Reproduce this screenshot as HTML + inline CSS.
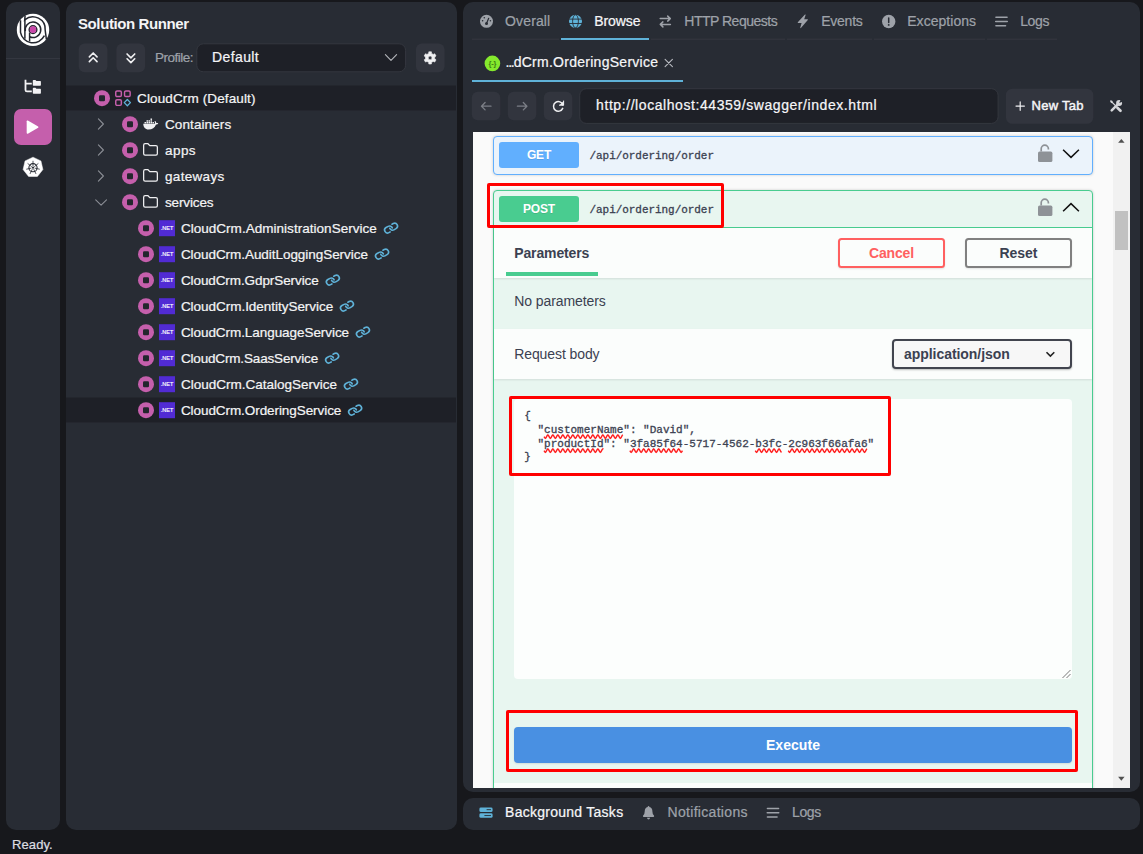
<!DOCTYPE html>
<html lang="en">
<head>
<meta charset="utf-8">
<title>Solution Runner</title>
<style>
*{box-sizing:border-box;margin:0;padding:0}
html,body{width:1143px;height:854px;overflow:hidden;background:#17181c}
body{position:relative;font-family:"Liberation Sans",Arial,sans-serif;color:#fff;font-size:13.5px}
.abs{position:absolute}
.panel{position:absolute;background:#282c34;border-radius:10px}
.t{position:absolute;white-space:pre;line-height:20px;height:20px}
.p{-webkit-text-stroke:0.22px currentColor}
.btn{position:absolute;background:#31343c;border-radius:6px}
svg{position:absolute;overflow:visible}
.row{position:absolute;left:66px;width:390px;height:25px;transform:translateY(0.45px)}
.row.sel{background:#1e2027}
.tr{font-size:13.5px;color:#f4f4f5}
.gray{color:#9ea2a9}
.sw{color:#3b4151}
.mono{font-family:"Liberation Mono",monospace}
</style>
</head>
<body>
<div class="panel" style="left:6px;top:2px;width:54px;height:828px"></div>
<div class="panel" style="left:66px;top:2px;width:391px;height:828px"></div>
<div class="panel" style="left:463px;top:2px;width:677px;height:790px"></div>
<div class="panel" style="left:463px;top:798px;width:677px;height:32px"></div>
<svg style="left:0;top:0" width="1143" height="854"><rect x="14" y="109" width="38" height="36" rx="7" fill="#c55fac"/><rect x="78.7" y="43.5" width="28.7" height="28.8" rx="6" fill="#32353e"/><rect x="116.4" y="43.5" width="28.7" height="28.8" rx="6" fill="#32353e"/><rect x="196.8" y="43.8" width="208.8" height="28" rx="6.5" fill="#1e2027" stroke="#34373f"/><rect x="415.9" y="43.5" width="28.6" height="28.8" rx="6" fill="#32353e"/><rect x="66" y="85.5" width="390" height="24.9" rx="0" fill="#1e2027"/><rect x="66" y="397.5" width="390" height="24.9" rx="0" fill="#1e2027"/><rect x="472" y="38.6" width="87" height="1.3" rx="0" fill="#32353d"/><rect x="651" y="38.6" width="134" height="1.3" rx="0" fill="#32353d"/><rect x="787" y="38.6" width="85" height="1.3" rx="0" fill="#32353d"/><rect x="874" y="38.6" width="111" height="1.3" rx="0" fill="#32353d"/><rect x="987" y="38.6" width="70" height="1.3" rx="0" fill="#32353d"/><rect x="471.8" y="91.7" width="28.5" height="28.5" rx="6" fill="#32353e"/><rect x="507.8" y="91.7" width="28.5" height="28.5" rx="6" fill="#32353e"/><rect x="543.8" y="91.7" width="28.5" height="28.5" rx="6" fill="#32353e"/><rect x="579.7" y="88.7" width="418.4" height="34.7" rx="6.5" fill="#1e2027" stroke="#34373f"/><rect x="1005.9" y="88.7" width="87.4" height="35.1" rx="6.5" fill="#32353e"/></svg>
<div class="abs" style="left:6px;top:58px;width:54px;height:1px;background:#343740"></div>
<svg style="left:16px;top:13px" width="32.4" height="32.4" viewBox="-17.000 -16.900 32.4 32.4">
<circle r="16.2" fill="#fff"/>
<g fill="none" stroke="#23262e" stroke-width="1.5" stroke-linecap="butt">
<path d="M-12.5 -9.6 L-12.5 2.4 A12.7 12.7 0 0 0 11.4 5.8"/>
<path d="M-7.9 -14.2 L-8.3 -10 A12.4 12.4 0 0 1 12.2 0.4 L13.4 9.4"/>
<path d="M-8.1 -9.8 L-8.1 8.8"/>
<path d="M-7.7 1.2 A7.8 7.8 0 1 1 -3.4 6.9"/>
<path d="M-3.4 2.6 L-3.4 11.4"/>
<circle cx="0" cy="-0.25" r="3.8"/>
</g>
<circle cx="0" cy="-0.25" r="3.3" fill="#c846a8"/>
</svg>
<svg style="left:24px;top:79px" width="17" height="15" viewBox="-0.200 -0.300 17 15">
<path d="M1.3 0.4 V10.6 Q1.3 12.1 2.8 12.1 H7.6 M1.3 4.4 H7.6" fill="none" stroke="#f2f2f4" stroke-width="1.8"/>
<path d="M8.6 1.3 Q8.6 0.6 9.3 0.6 H11.2 L12.2 1.6 H16 Q16.7 1.6 16.7 2.3 V5.7 Q16.7 6.4 16 6.4 H9.3 Q8.6 6.4 8.6 5.7 Z" fill="#f2f2f4"/>
<path d="M8.6 9.2 Q8.6 8.5 9.3 8.5 H11.2 L12.2 9.5 H16 Q16.7 9.5 16.7 10.2 V13.7 Q16.7 14.4 16 14.4 H9.3 Q8.6 14.4 8.6 13.7 Z" fill="#f2f2f4"/>
</svg>
<svg style="left:26px;top:119px" width="12.4" height="14.4" viewBox="-0.734 -0.875 13 14" preserveAspectRatio="none"><path d="M1.2 0.6 L12 6.3 Q12.8 7 12 7.7 L1.2 13.4 Q0 13.8 0 12.6 V1.4 Q0 0.2 1.2 0.6 Z" fill="#fff"/></svg>
<svg style="left:22px;top:156px" width="21" height="21" viewBox="-11.000 -11.300 21 21">
<path d="M0.00 -10.15 L7.94 -6.33 L9.90 2.26 L4.40 9.14 L-4.40 9.14 L-9.90 2.26 L-7.94 -6.33 Z" fill="#fff" stroke="#fff" stroke-width="0.5" stroke-linejoin="round"/>
<g fill="none" stroke="#2a2d35" stroke-width="1">
<circle cy="0.4" r="4.1" stroke-width="1.1"/>
<circle cy="0.4" r="1.1" fill="#2a2d35" stroke="none"/>
<path d="M0.00 -1.20 L0.00 -6.50 M1.25 -0.60 L5.39 -3.90 M1.56 0.76 L6.73 1.94 M0.69 1.84 L2.99 6.62 M-0.69 1.84 L-2.99 6.62 M-1.56 0.76 L-6.73 1.94 M-1.25 -0.60 L-5.39 -3.90" stroke-width="0.8"/>
</g>
</svg>
<div class="t" style="left:78px;top:14px;font-size:15px;font-weight:700;letter-spacing:-0.4px;color:#f4f4f6">Solution Runner</div>
<svg style="left:88px;top:52px" width="9.6" height="10.6" viewBox="-0.417 0.000 10 11" fill="none" stroke="#f0f0f2" stroke-width="1.7" stroke-linecap="round" stroke-linejoin="round"><path d="M1 5 L5 1 L9 5 M1 10 L5 6 L9 10"/></svg>
<svg style="left:126px;top:53px" width="9.6" height="10.6" viewBox="-0.104 0.000 10 11" fill="none" stroke="#f0f0f2" stroke-width="1.7" stroke-linecap="round" stroke-linejoin="round"><path d="M1 1 L5 5 L9 1 M1 6 L5 10 L9 6"/></svg>
<div class="t gray p" style="left:155.1px;top:48px;font-size:13.5px;letter-spacing:-0.53px">Profile:</div>
<div class="t p" style="left:212px;top:47px;font-size:14px;letter-spacing:0.39px;color:#f4f4f6">Default</div>
<svg style="left:384px;top:54px" width="12.4" height="7" viewBox="-0.800 0.000 12.4 7" fill="none" stroke="#b4b6bb" stroke-width="1.1" stroke-linecap="round" stroke-linejoin="round"><path d="M0.6 0.6 L6.2 6.3 L11.8 0.6"/></svg>
<svg style="left:423px;top:50px" width="14" height="14" viewBox="-7.100 -7.900 14 14"><path d="M-1.30 -6.11 L1.30 -6.11 L1.45 -4.47 L3.14 -3.49 L4.64 -4.18 L5.94 -1.93 L4.60 -0.98 L4.60 0.98 L5.94 1.93 L4.64 4.18 L3.14 3.49 L1.45 4.47 L1.30 6.11 L-1.30 6.11 L-1.45 4.47 L-3.14 3.49 L-4.64 4.18 L-5.94 1.93 L-4.60 0.98 L-4.60 -0.98 L-5.94 -1.93 L-4.64 -4.18 L-3.14 -3.49 L-1.45 -4.47 Z M1.9 0 A1.9 1.9 0 1 0 -1.9 0 A1.9 1.9 0 1 0 1.9 0 Z" fill="#f0f0f2" fill-rule="evenodd" stroke="#f0f0f2" stroke-width="0.6" stroke-linejoin="round"/></svg>
<svg style="left:94px;top:90px" width="16" height="16" viewBox="0.000 -0.200 16 16"><circle cx="8" cy="8" r="8" fill="#c55fac"/><rect x="5" y="5" width="6" height="6" rx="1.2" fill="#23262d"/></svg>
<svg style="left:115px;top:90px" width="16" height="16" viewBox="0.000 -0.200 16 16" fill="none" stroke-width="1.45"><rect x="0.75" y="0.75" width="5.6" height="5.6" rx="1.3" stroke="#c55fac"/><rect x="9.55" y="0.75" width="5.6" height="5.6" rx="1.3" stroke="#c55fac"/><rect x="0.75" y="9.55" width="5.6" height="5.6" rx="1.3" stroke="#c55fac"/><path d="M12.35 9.3 L15.45 12.4 L12.35 15.5 L9.25 12.4 Z" stroke="#5fb2d8" stroke-width="1.3" stroke-linejoin="round"/></svg>
<div class="t tr p" style="left:137px;top:89px;letter-spacing:0.13px">CloudCrm (Default)</div>
<svg style="left:97px;top:118px" width="6.2" height="11.6" viewBox="-0.800 -0.200 6.2 11.6" fill="none" stroke="#8b8e95" stroke-width="1.1" stroke-linecap="round" stroke-linejoin="round"><path d="M0.6 0.6 L5.6 5.8 L0.6 11"/></svg>
<svg style="left:122px;top:116px" width="16" height="16" viewBox="0.000 -0.200 16 16"><circle cx="8" cy="8" r="8" fill="#c55fac"/><rect x="5" y="5" width="6" height="6" rx="1.2" fill="#23262d"/></svg>
<svg style="left:143px;top:118px" width="15.5" height="11" viewBox="0.000 -1.600 31 22" fill="#f0f0f2"><path d="M0.5 10 H23.5 C24.5 8.5 24.2 6.2 23 4.8 C23.6 4.2 24.4 4.4 25 4.9 C26.3 6 26.6 7.6 26.4 8.6 C28 8 29.6 8.3 30.6 9 C29.8 11 27.8 11.6 26 11.5 C23.5 18 18.5 21.5 11 21.5 C4.5 21.5 0.8 17 0.5 10 Z"/><rect x="3" y="6.4" width="3.1" height="2.9"/><rect x="7" y="6.4" width="3.1" height="2.9"/><rect x="11" y="6.4" width="3.1" height="2.9"/><rect x="15" y="6.4" width="3.1" height="2.9"/><rect x="19" y="6.4" width="3.1" height="2.9"/><rect x="7" y="2.9" width="3.1" height="2.9"/><rect x="11" y="2.9" width="3.1" height="2.9"/><rect x="15" y="2.9" width="3.1" height="2.9"/><rect x="15" y="-0.6" width="3.1" height="2.9"/></svg>
<div class="t tr p" style="left:165px;top:115px;letter-spacing:0.1px">Containers</div>
<svg style="left:97px;top:144px" width="6.2" height="11.6" viewBox="-0.800 -0.200 6.2 11.6" fill="none" stroke="#8b8e95" stroke-width="1.1" stroke-linecap="round" stroke-linejoin="round"><path d="M0.6 0.6 L5.6 5.8 L0.6 11"/></svg>
<svg style="left:122px;top:142px" width="16" height="16" viewBox="0.000 -0.200 16 16"><circle cx="8" cy="8" r="8" fill="#c55fac"/><rect x="5" y="5" width="6" height="6" rx="1.2" fill="#23262d"/></svg>
<svg style="left:143px;top:143px" width="15" height="12.8" viewBox="0.000 -0.100 15 12.8" fill="none" stroke="#f0f0f2" stroke-width="1.25" stroke-linejoin="round"><path d="M0.65 2.1 Q0.65 0.65 2.1 0.65 L5 0.65 L6.8 2.6 L12.9 2.6 Q14.35 2.6 14.35 4 L14.35 10.7 Q14.35 12.15 12.9 12.15 L2.1 12.15 Q0.65 12.15 0.65 10.7 Z"/></svg>
<div class="t tr p" style="left:165px;top:141px;letter-spacing:0.44px">apps</div>
<svg style="left:97px;top:170px" width="6.2" height="11.6" viewBox="-0.800 -0.200 6.2 11.6" fill="none" stroke="#8b8e95" stroke-width="1.1" stroke-linecap="round" stroke-linejoin="round"><path d="M0.6 0.6 L5.6 5.8 L0.6 11"/></svg>
<svg style="left:122px;top:168px" width="16" height="16" viewBox="0.000 -0.200 16 16"><circle cx="8" cy="8" r="8" fill="#c55fac"/><rect x="5" y="5" width="6" height="6" rx="1.2" fill="#23262d"/></svg>
<svg style="left:143px;top:169px" width="15" height="12.8" viewBox="0.000 -0.100 15 12.8" fill="none" stroke="#f0f0f2" stroke-width="1.25" stroke-linejoin="round"><path d="M0.65 2.1 Q0.65 0.65 2.1 0.65 L5 0.65 L6.8 2.6 L12.9 2.6 Q14.35 2.6 14.35 4 L14.35 10.7 Q14.35 12.15 12.9 12.15 L2.1 12.15 Q0.65 12.15 0.65 10.7 Z"/></svg>
<div class="t tr p" style="left:165px;top:167px;letter-spacing:0.31px">gateways</div>
<svg style="left:95px;top:199px" width="12" height="6.4" viewBox="-0.100 -0.300 12 6.4" fill="none" stroke="#8b8e95" stroke-width="1.1" stroke-linecap="round" stroke-linejoin="round"><path d="M0.6 0.6 L6 5.8 L11.4 0.6"/></svg>
<svg style="left:122px;top:194px" width="16" height="16" viewBox="0.000 -0.200 16 16"><circle cx="8" cy="8" r="8" fill="#c55fac"/><rect x="5" y="5" width="6" height="6" rx="1.2" fill="#23262d"/></svg>
<svg style="left:143px;top:195px" width="15" height="12.8" viewBox="0.000 -0.100 15 12.8" fill="none" stroke="#f0f0f2" stroke-width="1.25" stroke-linejoin="round"><path d="M0.65 2.1 Q0.65 0.65 2.1 0.65 L5 0.65 L6.8 2.6 L12.9 2.6 Q14.35 2.6 14.35 4 L14.35 10.7 Q14.35 12.15 12.9 12.15 L2.1 12.15 Q0.65 12.15 0.65 10.7 Z"/></svg>
<div class="t tr p" style="left:165px;top:193px;letter-spacing:-0.13px">services</div>
<svg style="left:138px;top:220px" width="16" height="16" viewBox="0.000 -0.200 16 16"><circle cx="8" cy="8" r="8" fill="#c55fac"/><rect x="5" y="5" width="6" height="6" rx="1.2" fill="#23262d"/></svg>
<svg style="left:159px;top:220px" width="16" height="16" viewBox="0.000 -0.200 16 16"><rect width="16" height="16" fill="#512bd4"/><text x="8" y="10" font-family="Liberation Sans,Arial,sans-serif" font-size="5.5" font-weight="400" fill="#fff" stroke="#fff" stroke-width="0.15" text-anchor="middle">.NET</text></svg>
<svg style="left:382px;top:220px" width="17.7" height="14.4" viewBox="-15.595 -13.950 30.5 24.8" fill="none" stroke="#5fb2d8" stroke-width="2.8" stroke-linecap="round" stroke-linejoin="round"><g transform="rotate(16) translate(-12 -12)"><path d="M10 13a5 5 0 0 0 7.54.54l3-3a5 5 0 0 0-7.07-7.07l-1.72 1.71"/><path d="M14 11a5 5 0 0 0-7.54-.54l-3 3a5 5 0 0 0 7.07 7.07l1.71-1.71"/></g></svg>
<div class="t tr p" style="left:180.9px;top:219px;letter-spacing:0.03px">CloudCrm.AdministrationService</div>
<svg style="left:138px;top:246px" width="16" height="16" viewBox="0.000 -0.200 16 16"><circle cx="8" cy="8" r="8" fill="#c55fac"/><rect x="5" y="5" width="6" height="6" rx="1.2" fill="#23262d"/></svg>
<svg style="left:159px;top:246px" width="16" height="16" viewBox="0.000 -0.200 16 16"><rect width="16" height="16" fill="#512bd4"/><text x="8" y="10" font-family="Liberation Sans,Arial,sans-serif" font-size="5.5" font-weight="400" fill="#fff" stroke="#fff" stroke-width="0.15" text-anchor="middle">.NET</text></svg>
<svg style="left:373px;top:246px" width="17.7" height="14.4" viewBox="-15.595 -13.950 30.5 24.8" fill="none" stroke="#5fb2d8" stroke-width="2.8" stroke-linecap="round" stroke-linejoin="round"><g transform="rotate(16) translate(-12 -12)"><path d="M10 13a5 5 0 0 0 7.54.54l3-3a5 5 0 0 0-7.07-7.07l-1.72 1.71"/><path d="M14 11a5 5 0 0 0-7.54-.54l-3 3a5 5 0 0 0 7.07 7.07l1.71-1.71"/></g></svg>
<div class="t tr p" style="left:180.9px;top:245px;letter-spacing:-0.05px">CloudCrm.AuditLoggingService</div>
<svg style="left:138px;top:272px" width="16" height="16" viewBox="0.000 -0.200 16 16"><circle cx="8" cy="8" r="8" fill="#c55fac"/><rect x="5" y="5" width="6" height="6" rx="1.2" fill="#23262d"/></svg>
<svg style="left:159px;top:272px" width="16" height="16" viewBox="0.000 -0.200 16 16"><rect width="16" height="16" fill="#512bd4"/><text x="8" y="10" font-family="Liberation Sans,Arial,sans-serif" font-size="5.5" font-weight="400" fill="#fff" stroke="#fff" stroke-width="0.15" text-anchor="middle">.NET</text></svg>
<svg style="left:324px;top:272px" width="17.7" height="14.4" viewBox="-15.250 -13.950 30.5 24.8" fill="none" stroke="#5fb2d8" stroke-width="2.8" stroke-linecap="round" stroke-linejoin="round"><g transform="rotate(16) translate(-12 -12)"><path d="M10 13a5 5 0 0 0 7.54.54l3-3a5 5 0 0 0-7.07-7.07l-1.72 1.71"/><path d="M14 11a5 5 0 0 0-7.54-.54l-3 3a5 5 0 0 0 7.07 7.07l1.71-1.71"/></g></svg>
<div class="t tr p" style="left:180.9px;top:271px;letter-spacing:-0.09px">CloudCrm.GdprService</div>
<svg style="left:138px;top:298px" width="16" height="16" viewBox="0.000 -0.200 16 16"><circle cx="8" cy="8" r="8" fill="#c55fac"/><rect x="5" y="5" width="6" height="6" rx="1.2" fill="#23262d"/></svg>
<svg style="left:159px;top:298px" width="16" height="16" viewBox="0.000 -0.200 16 16"><rect width="16" height="16" fill="#512bd4"/><text x="8" y="10" font-family="Liberation Sans,Arial,sans-serif" font-size="5.5" font-weight="400" fill="#fff" stroke="#fff" stroke-width="0.15" text-anchor="middle">.NET</text></svg>
<svg style="left:338px;top:298px" width="17.7" height="14.4" viewBox="-15.422 -13.950 30.5 24.8" fill="none" stroke="#5fb2d8" stroke-width="2.8" stroke-linecap="round" stroke-linejoin="round"><g transform="rotate(16) translate(-12 -12)"><path d="M10 13a5 5 0 0 0 7.54.54l3-3a5 5 0 0 0-7.07-7.07l-1.72 1.71"/><path d="M14 11a5 5 0 0 0-7.54-.54l-3 3a5 5 0 0 0 7.07 7.07l1.71-1.71"/></g></svg>
<div class="t tr p" style="left:180.9px;top:297px;letter-spacing:-0.03px">CloudCrm.IdentityService</div>
<svg style="left:138px;top:324px" width="16" height="16" viewBox="0.000 -0.200 16 16"><circle cx="8" cy="8" r="8" fill="#c55fac"/><rect x="5" y="5" width="6" height="6" rx="1.2" fill="#23262d"/></svg>
<svg style="left:159px;top:324px" width="16" height="16" viewBox="0.000 -0.200 16 16"><rect width="16" height="16" fill="#512bd4"/><text x="8" y="10" font-family="Liberation Sans,Arial,sans-serif" font-size="5.5" font-weight="400" fill="#fff" stroke="#fff" stroke-width="0.15" text-anchor="middle">.NET</text></svg>
<svg style="left:354px;top:324px" width="17.7" height="14.4" viewBox="-15.422 -13.950 30.5 24.8" fill="none" stroke="#5fb2d8" stroke-width="2.8" stroke-linecap="round" stroke-linejoin="round"><g transform="rotate(16) translate(-12 -12)"><path d="M10 13a5 5 0 0 0 7.54.54l3-3a5 5 0 0 0-7.07-7.07l-1.72 1.71"/><path d="M14 11a5 5 0 0 0-7.54-.54l-3 3a5 5 0 0 0 7.07 7.07l1.71-1.71"/></g></svg>
<div class="t tr p" style="left:180.9px;top:323px;letter-spacing:-0.06px">CloudCrm.LanguageService</div>
<svg style="left:138px;top:350px" width="16" height="16" viewBox="0.000 -0.200 16 16"><circle cx="8" cy="8" r="8" fill="#c55fac"/><rect x="5" y="5" width="6" height="6" rx="1.2" fill="#23262d"/></svg>
<svg style="left:159px;top:350px" width="16" height="16" viewBox="0.000 -0.200 16 16"><rect width="16" height="16" fill="#512bd4"/><text x="8" y="10" font-family="Liberation Sans,Arial,sans-serif" font-size="5.5" font-weight="400" fill="#fff" stroke="#fff" stroke-width="0.15" text-anchor="middle">.NET</text></svg>
<svg style="left:323px;top:350px" width="17.7" height="14.4" viewBox="-15.767 -13.950 30.5 24.8" fill="none" stroke="#5fb2d8" stroke-width="2.8" stroke-linecap="round" stroke-linejoin="round"><g transform="rotate(16) translate(-12 -12)"><path d="M10 13a5 5 0 0 0 7.54.54l3-3a5 5 0 0 0-7.07-7.07l-1.72 1.71"/><path d="M14 11a5 5 0 0 0-7.54-.54l-3 3a5 5 0 0 0 7.07 7.07l1.71-1.71"/></g></svg>
<div class="t tr p" style="left:180.9px;top:349px;letter-spacing:-0.16px">CloudCrm.SaasService</div>
<svg style="left:138px;top:376px" width="16" height="16" viewBox="0.000 -0.200 16 16"><circle cx="8" cy="8" r="8" fill="#c55fac"/><rect x="5" y="5" width="6" height="6" rx="1.2" fill="#23262d"/></svg>
<svg style="left:159px;top:376px" width="16" height="16" viewBox="0.000 -0.200 16 16"><rect width="16" height="16" fill="#512bd4"/><text x="8" y="10" font-family="Liberation Sans,Arial,sans-serif" font-size="5.5" font-weight="400" fill="#fff" stroke="#fff" stroke-width="0.15" text-anchor="middle">.NET</text></svg>
<svg style="left:342px;top:376px" width="17.7" height="14.4" viewBox="-15.422 -13.950 30.5 24.8" fill="none" stroke="#5fb2d8" stroke-width="2.8" stroke-linecap="round" stroke-linejoin="round"><g transform="rotate(16) translate(-12 -12)"><path d="M10 13a5 5 0 0 0 7.54.54l3-3a5 5 0 0 0-7.07-7.07l-1.72 1.71"/><path d="M14 11a5 5 0 0 0-7.54-.54l-3 3a5 5 0 0 0 7.07 7.07l1.71-1.71"/></g></svg>
<div class="t tr p" style="left:180.9px;top:375px;letter-spacing:0.0px">CloudCrm.CatalogService</div>
<svg style="left:138px;top:402px" width="16" height="16" viewBox="0.000 -0.200 16 16"><circle cx="8" cy="8" r="8" fill="#c55fac"/><rect x="5" y="5" width="6" height="6" rx="1.2" fill="#23262d"/></svg>
<svg style="left:159px;top:402px" width="16" height="16" viewBox="0.000 -0.200 16 16"><rect width="16" height="16" fill="#512bd4"/><text x="8" y="10" font-family="Liberation Sans,Arial,sans-serif" font-size="5.5" font-weight="400" fill="#fff" stroke="#fff" stroke-width="0.15" text-anchor="middle">.NET</text></svg>
<svg style="left:346px;top:402px" width="17.7" height="14.4" viewBox="-15.767 -13.950 30.5 24.8" fill="none" stroke="#5fb2d8" stroke-width="2.8" stroke-linecap="round" stroke-linejoin="round"><g transform="rotate(16) translate(-12 -12)"><path d="M10 13a5 5 0 0 0 7.54.54l3-3a5 5 0 0 0-7.07-7.07l-1.72 1.71"/><path d="M14 11a5 5 0 0 0-7.54-.54l-3 3a5 5 0 0 0 7.07 7.07l1.71-1.71"/></g></svg>
<div class="t tr p" style="left:180.9px;top:401px;letter-spacing:-0.07px">CloudCrm.OrderingService</div>
<svg style="left:480px;top:14px" width="13" height="13" viewBox="-6.500 -7.300 13 13"><circle r="6.5" fill="#9ea2a9"/>
<circle cx="0" cy="2.2" r="1.5" fill="#282c34"/><path d="M0 2.2 L2.2 -3" stroke="#282c34" stroke-width="1.2" stroke-linecap="round"/>
<circle cx="-3.9" cy="-0.5" r="0.8" fill="#282c34"/><circle cx="-2.2" cy="-3.5" r="0.8" fill="#282c34"/><circle cx="3.9" cy="-0.5" r="0.8" fill="#282c34"/></svg>
<div class="t p" style="left:505.1px;top:10.5px;font-size:14px;letter-spacing:0.12px;color:#9ea2a9;font-weight:400">Overall</div>
<svg style="left:569px;top:14px" width="13" height="13" viewBox="-6.500 -7.300 13 13"><circle r="6.5" fill="#5fb2d8"/>
<g fill="none" stroke="#282c34" stroke-width="0.9"><ellipse rx="2.9" ry="6.5"/><path d="M-6.5 -2.2 H6.5 M-6.5 2.2 H6.5"/></g></svg>
<div class="t p" style="left:594.3px;top:10.5px;font-size:14px;letter-spacing:-0.1px;color:#f6f6f8;font-weight:400">Browse</div>
<div class="abs" style="left:561px;top:38px;width:88px;height:2px;background:#5fb2d8"></div>
<svg style="left:659px;top:15px" width="12" height="12.6" viewBox="-0.300 -0.200 12 12.6" fill="none" stroke="#9ea2a9" stroke-width="1.5" stroke-linecap="round" stroke-linejoin="round">
<path d="M0.9 3.4 H11 M8.4 0.9 L11 3.4 L8.4 5.9 M11.1 9.2 H1 M3.6 6.7 L1 9.2 L3.6 11.7"/></svg>
<div class="t p" style="left:684.3px;top:10.5px;font-size:14px;letter-spacing:-0.5px;color:#9ea2a9;font-weight:400">HTTP Requests</div>
<svg style="left:797px;top:14px" width="11" height="14" viewBox="-0.300 -0.300 11 14"><path d="M8 0.2 Q8.6 0.1 8.3 0.8 L6.9 5 H10.2 Q10.9 5.1 10.5 5.7 L3.6 13.7 Q2.9 14.1 3 13.3 L4.3 8.6 H0.8 Q0.1 8.5 0.5 7.9 L7.4 0.4 Z" fill="#9ea2a9"/></svg>
<div class="t p" style="left:821.2px;top:10.5px;font-size:14px;letter-spacing:-0.24px;color:#9ea2a9;font-weight:400">Events</div>
<svg style="left:882px;top:14px" width="13.4" height="13.4" viewBox="-6.700 -7.500 13.4 13.4"><circle r="6.7" fill="#9ea2a9"/>
<path d="M0 -3.6 V1" stroke="#282c34" stroke-width="1.5" stroke-linecap="round"/><circle cx="0" cy="3.4" r="0.95" fill="#282c34"/></svg>
<div class="t p" style="left:907.2px;top:10.5px;font-size:14px;letter-spacing:0.05px;color:#9ea2a9;font-weight:400">Exceptions</div>
<svg style="left:995px;top:16px" width="13" height="10" viewBox="0.000 -0.500 13 10" fill="none" stroke="#9ea2a9" stroke-width="1.45" stroke-linecap="round"><path d="M0.9 0.7 H12.1 M0.7 5 H12.3 M0.9 9.3 H10.6"/></svg>
<div class="t p" style="left:1020.2px;top:10.5px;font-size:14px;letter-spacing:-0.35px;color:#9ea2a9;font-weight:400">Logs</div>
<svg style="left:484px;top:55px" width="16" height="16" viewBox="-8.400 -8.400 16 16"><circle r="7.8" fill="#85ea2d"/>
<text x="0" y="2.5" font-family="Liberation Sans,Arial,sans-serif" font-size="7.5" font-weight="700" fill="#3d7f14" text-anchor="middle" letter-spacing="-0.2">{-}</text></svg>
<div class="t p" style="left:505.4px;top:52px;font-size:14px;letter-spacing:0px;color:#f6f6f8;font-weight:400"><span style="letter-spacing:-1.15px">...</span><span style="letter-spacing:0.27px">dCrm.OrderingService</span></div>
<svg style="left:664px;top:58px" width="8.5" height="8.5" viewBox="-0.500 -0.800 8.5 8.5" fill="none" stroke="#b9bcc2" stroke-width="1.1" stroke-linecap="round"><path d="M0.6 0.6 L7.9 7.9 M7.9 0.6 L0.6 7.9"/></svg>
<div class="abs" style="left:472px;top:80px;width:211px;height:2px;background:#5fb2d8"></div>
<svg style="left:480px;top:101px" width="11" height="9" viewBox="-0.700 -0.700 11 9" fill="none" stroke="#7b7e86" stroke-width="1.3" stroke-linecap="round" stroke-linejoin="round"><path d="M10.3 4.5 H0.8 M4.4 0.8 L0.8 4.5 L4.4 8.2"/></svg>
<svg style="left:516px;top:101px" width="11" height="9" viewBox="-0.700 -0.700 11 9" fill="none" stroke="#7b7e86" stroke-width="1.3" stroke-linecap="round" stroke-linejoin="round"><path d="M0.7 4.5 H10.2 M6.6 0.8 L10.2 4.5 L6.6 8.2"/></svg>
<svg style="left:552px;top:100px" width="12" height="12" viewBox="-6.300 -6.200 12 12" fill="none" stroke="#f0f0f2" stroke-width="1.5" stroke-linecap="round" stroke-linejoin="round"><path d="M4.6 -1.2 A4.8 4.8 0 1 0 4.4 2.2"/><path d="M5.3 -5.2 V-1 H1.1" fill="#f0f0f2" stroke-width="1"/></svg>
<div class="t p" style="left:596.1px;top:95px;font-size:14px;letter-spacing:0.57px;color:#f6f6f8;font-weight:400">http://localhost:44359/swagger/index.html</div>
<svg style="left:1015px;top:101px" width="9.6" height="9.6" viewBox="-0.400 -0.300 9.6 9.6" fill="none" stroke="#f0f0f2" stroke-width="1.2" stroke-linecap="round"><path d="M4.8 0.6 V9 M0.6 4.8 H9"/></svg>
<div class="t" style="left:1031.6px;top:96px;font-size:13px;letter-spacing:0.27px;color:#f6f6f8;-webkit-text-stroke:0.45px #f6f6f8">New Tab</div>
<svg style="left:1109px;top:99px" width="13" height="12.6" viewBox="-0.600 -0.800 13 12.6">
<g fill="none" stroke="#d6d7da" stroke-linecap="round">
<path d="M2.1 10.6 L7.6 5.1" stroke-width="2.5"/>
<path d="M7.8 7.9 L10.9 11" stroke-width="2.7"/>
<path d="M1.6 1.6 L5.6 5.6" stroke-width="1.3"/>
</g>
<circle cx="9.5" cy="3.3" r="3" fill="#d6d7da"/>
<path d="M9.6 3.2 L11.2 -0.6 L13.6 1.8 Z" fill="#282c34"/>
<path d="M0.6 0.4 L2.6 0.9 L3.4 2.6 L2.3 3.5 L0.9 2.5 Z" fill="#d6d7da"/>
</svg>
<div class="abs sw" style="left:473px;top:132px;width:657px;height:656px;background:#fafafa;overflow:hidden"><div class="abs" style="left:640px;top:0;width:17px;height:656px;background:#f1f1f1"></div><div class="abs" style="left:642px;top:79px;width:13px;height:39px;background:#c1c1c1"></div><svg style="left:644px;top:6px" width="7.4" height="4.4" viewBox="-0.757 -0.795 8 5"><path d="M4 0.3 L7.7 4.6 H0.3 Z" fill="#505050"/></svg><svg style="left:644px;top:644px" width="7.4" height="4.4" viewBox="-0.757 -0.568 8 5"><path d="M0.3 0.4 H7.7 L4 4.7 Z" fill="#505050"/></svg><div class="abs" style="left:20px;top:4px;width:600px;height:39px;background:#ebf3fb;border:1px solid #61affe;border-radius:4px;box-shadow:0 0 3px rgba(0,0,0,.19)"></div><div class="abs" style="left:26px;top:10px;width:80px;height:26px;background:#61affe;border-radius:3px"></div><div class="t" style="left:26px;top:13px;width:80px;text-align:center;font-size:12px;font-weight:700;color:#fff;letter-spacing:-0.2px;text-shadow:0 1px 0 rgba(0,0,0,.1)">GET</div><div class="t mono" style="left:116.5px;top:13.5px;font-size:11px;font-weight:400;-webkit-text-stroke:0.3px #3b4151;color:#3b4151;letter-spacing:-0.05px">/api/ordering/order</div><svg style="left:565px;top:12px" width="14.4" height="18" viewBox="0 0 14.4 18"><rect x="0" y="7.6" width="14.4" height="10.4" rx="1.6" fill="#8e9297"/><path d="M3.2 7.6 V4.8 A3.6 3.6 0 0 1 10.4 4.8 V5.6" fill="none" stroke="#8e9297" stroke-width="1.7"/></svg><svg style="left:589px;top:17px" width="17" height="9.5" viewBox="-0.500 0.000 17 9.5" fill="none" stroke="#111" stroke-width="1.5"><path d="M0.6 0.7 L8.5 8.4 L16.4 0.7"/></svg><div class="abs" style="left:20px;top:58.2px;width:600px;height:640px;background:#e8f6f0;border:1px solid #49cc90;border-radius:4px;box-shadow:0 0 3px rgba(0,0,0,.19)"></div><div class="abs" style="left:21px;top:94.7px;width:598px;height:1px;background:#49cc90"></div><div class="abs" style="left:26px;top:64px;width:80px;height:26px;background:#49cc90;border-radius:3px"></div><div class="t" style="left:26px;top:67px;width:80px;text-align:center;font-size:12px;font-weight:700;color:#fff;letter-spacing:-0.2px;text-shadow:0 1px 0 rgba(0,0,0,.1)">POST</div><div class="t mono" style="left:116.5px;top:67.5px;font-size:11px;font-weight:400;-webkit-text-stroke:0.3px #3b4151;color:#3b4151;letter-spacing:-0.05px">/api/ordering/order</div><svg style="left:565px;top:66px" width="14.4" height="18" viewBox="0 0 14.4 18"><rect x="0" y="7.6" width="14.4" height="10.4" rx="1.6" fill="#8e9297"/><path d="M3.2 7.6 V4.8 A3.6 3.6 0 0 1 10.4 4.8 V5.6" fill="none" stroke="#8e9297" stroke-width="1.7"/></svg><svg style="left:589px;top:70px" width="17" height="9.5" viewBox="-0.500 -0.500 17 9.5" fill="none" stroke="#111" stroke-width="1.5"><path d="M0.6 8.8 L8.5 1.1 L16.4 8.8"/></svg><div class="abs" style="left:21px;top:95.7px;width:598px;height:50.3px;background:#fbfdfc;box-shadow:0 1px 2px rgba(0,0,0,.1)"></div><div class="t" style="left:41.2px;top:111.3px;font-size:14px;font-weight:700;color:#3b4151;letter-spacing:-0.12px">Parameters</div><div class="abs" style="left:33px;top:140px;width:92px;height:4px;background:#49cc90"></div><div class="abs" style="left:365.2px;top:106.3px;width:106.5px;height:29.5px;border:2px solid #ff6060;border-radius:3.5px;background:#fbfdfc;box-shadow:0 1px 2px rgba(0,0,0,.1)"></div><div class="t" style="left:365.2px;top:111.3px;width:106.5px;text-align:center;font-size:14px;font-weight:700;color:#ff6060;letter-spacing:-0.16px">Cancel</div><div class="abs" style="left:492.2px;top:106.3px;width:106.5px;height:29.5px;border:2px solid #808080;border-radius:3.5px;background:#fbfdfc;box-shadow:0 1px 2px rgba(0,0,0,.1)"></div><div class="t" style="left:492.2px;top:111.3px;width:106.5px;text-align:center;font-size:14px;font-weight:700;color:#3b4151;letter-spacing:-0.06px">Reset</div><div class="t" style="left:41.2px;top:159px;font-size:14px;color:#3b4151;letter-spacing:-0.08px">No parameters</div><div class="abs" style="left:21px;top:196.5px;width:598px;height:50.5px;background:#fbfdfc;box-shadow:0 1px 2px rgba(0,0,0,.1)"></div><div class="t" style="left:41.2px;top:212.3px;font-size:14px;color:#3b4151;letter-spacing:-0.09px">Request body</div><div class="abs" style="left:419.4px;top:207.4px;width:179.4px;height:29.3px;border:2px solid #41444e;border-radius:4px;background:#f7f7f7;box-shadow:0 1px 2px rgba(0,0,0,.25)"></div><div class="t" style="left:431px;top:212.3px;font-size:14px;font-weight:700;color:#3b4151;letter-spacing:-0.05px">application/json</div><svg style="left:572px;top:219px" width="9.2" height="5.8" viewBox="-0.800 -0.500 9.2 5.8" fill="none" stroke="#222" stroke-width="1.6"><path d="M0.7 0.8 L4.6 4.6 L8.5 0.8"/></svg><div class="abs" style="left:41px;top:267px;width:558px;height:280px;background:#fcfefd;border-radius:4px"></div><div class="t mono" style="left:51.3px;top:274.0px;font-size:11px;font-weight:400;-webkit-text-stroke:0.3px #3b4151;color:#3b4151;letter-spacing:0">{</div><div class="t mono" style="left:51.3px;top:287.8px;font-size:11px;font-weight:400;-webkit-text-stroke:0.3px #3b4151;color:#3b4151;letter-spacing:0">  &quot;customerName&quot;: &quot;David&quot;,</div><div class="t mono" style="left:51.3px;top:301.6px;font-size:11px;font-weight:400;-webkit-text-stroke:0.3px #3b4151;color:#3b4151;letter-spacing:0">  &quot;productId&quot;: &quot;3fa85f64-5717-4562-b3fc-2c963f66afa6&quot;</div><div class="t mono" style="left:51.3px;top:315.4px;font-size:11px;font-weight:400;-webkit-text-stroke:0.3px #3b4151;color:#3b4151;letter-spacing:0">}</div><svg style="left:0;top:0" width="657" height="656" fill="none" stroke="#ff2020" stroke-width="1.4"><path d="M71.10 304.60 L71.72 305.87 L72.35 306.40 L72.97 305.87 L73.60 304.60 L74.22 303.33 L74.85 302.80 L75.47 303.33 L76.10 304.60 L76.72 305.87 L77.35 306.40 L77.97 305.87 L78.60 304.60 L79.22 303.33 L79.85 302.80 L80.47 303.33 L81.10 304.60 L81.72 305.87 L82.35 306.40 L82.97 305.87 L83.60 304.60 L84.22 303.33 L84.85 302.80 L85.47 303.33 L86.10 304.60 L86.72 305.87 L87.35 306.40 L87.97 305.87 L88.60 304.60 L89.22 303.33 L89.85 302.80 L90.47 303.33 L91.10 304.60 L91.72 305.87 L92.35 306.40 L92.97 305.87 L93.60 304.60 L94.22 303.33 L94.85 302.80 L95.47 303.33 L96.10 304.60 L96.72 305.87 L97.35 306.40 L97.97 305.87 L98.60 304.60 L99.22 303.33 L99.85 302.80 L100.47 303.33 L101.10 304.60 L101.72 305.87 L102.35 306.40 L102.97 305.87 L103.60 304.60 L104.22 303.33 L104.85 302.80 L105.47 303.33 L106.10 304.60 L106.72 305.87 L107.35 306.40 L107.97 305.87 L108.60 304.60 L109.22 303.33 L109.85 302.80 L110.47 303.33 L111.10 304.60 L111.72 305.87 L112.35 306.40 L112.97 305.87 L113.60 304.60 L114.22 303.33 L114.85 302.80 L115.47 303.33 L116.10 304.60 L116.72 305.87 L117.35 306.40 L117.97 305.87 L118.60 304.60 L119.22 303.33 L119.85 302.80 L120.47 303.33 L121.10 304.60 L121.72 305.87 L122.35 306.40 L122.97 305.87 L123.60 304.60 L124.22 303.33 L124.85 302.80 L125.47 303.33 L126.10 304.60 L126.72 305.87 L127.35 306.40 L127.97 305.87 L128.60 304.60 L129.22 303.33 L129.85 302.80 L130.47 303.33 L131.10 304.60 L131.72 305.87 L132.35 306.40 L132.97 305.87 L133.60 304.60 L134.22 303.33 L134.85 302.80 L135.47 303.33 L136.10 304.60 L136.72 305.87 L137.35 306.40 L137.97 305.87 L138.60 304.60 L139.22 303.33 L139.85 302.80 L140.47 303.33 L141.10 304.60 L141.72 305.87 L142.35 306.40 L142.97 305.87 L143.60 304.60 L144.22 303.33 L144.85 302.80 L145.47 303.33 L146.10 304.60 L146.72 305.87 L147.35 306.40 L147.97 305.87 L148.60 304.60 L149.22 303.33 L149.85 302.80"/><path d="M71.10 318.60 L71.72 319.87 L72.35 320.40 L72.97 319.87 L73.60 318.60 L74.22 317.33 L74.85 316.80 L75.47 317.33 L76.10 318.60 L76.72 319.87 L77.35 320.40 L77.97 319.87 L78.60 318.60 L79.22 317.33 L79.85 316.80 L80.47 317.33 L81.10 318.60 L81.72 319.87 L82.35 320.40 L82.97 319.87 L83.60 318.60 L84.22 317.33 L84.85 316.80 L85.47 317.33 L86.10 318.60 L86.72 319.87 L87.35 320.40 L87.97 319.87 L88.60 318.60 L89.22 317.33 L89.85 316.80 L90.47 317.33 L91.10 318.60 L91.72 319.87 L92.35 320.40 L92.97 319.87 L93.60 318.60 L94.22 317.33 L94.85 316.80 L95.47 317.33 L96.10 318.60 L96.72 319.87 L97.35 320.40 L97.97 319.87 L98.60 318.60 L99.22 317.33 L99.85 316.80 L100.47 317.33 L101.10 318.60 L101.72 319.87 L102.35 320.40 L102.97 319.87 L103.60 318.60 L104.22 317.33 L104.85 316.80 L105.47 317.33 L106.10 318.60 L106.72 319.87 L107.35 320.40 L107.97 319.87 L108.60 318.60 L109.22 317.33 L109.85 316.80 L110.47 317.33 L111.10 318.60 L111.72 319.87 L112.35 320.40 L112.97 319.87 L113.60 318.60 L114.22 317.33 L114.85 316.80 L115.47 317.33 L116.10 318.60 L116.72 319.87 L117.35 320.40 L117.97 319.87 L118.60 318.60 L119.22 317.33 L119.85 316.80 L120.47 317.33 L121.10 318.60 L121.72 319.87 L122.35 320.40 L122.97 319.87 L123.60 318.60 L124.22 317.33 L124.85 316.80 L125.47 317.33 L126.10 318.60 L126.72 319.87 L127.35 320.40 L127.97 319.87 L128.60 318.60 L129.22 317.33 L129.85 316.80 L130.47 317.33"/><path d="M156.90 318.60 L157.52 319.87 L158.15 320.40 L158.77 319.87 L159.40 318.60 L160.02 317.33 L160.65 316.80 L161.27 317.33 L161.90 318.60 L162.52 319.87 L163.15 320.40 L163.77 319.87 L164.40 318.60 L165.02 317.33 L165.65 316.80 L166.27 317.33 L166.90 318.60 L167.52 319.87 L168.15 320.40 L168.77 319.87 L169.40 318.60 L170.02 317.33 L170.65 316.80 L171.27 317.33 L171.90 318.60 L172.52 319.87 L173.15 320.40 L173.77 319.87 L174.40 318.60 L175.02 317.33 L175.65 316.80 L176.27 317.33 L176.90 318.60 L177.52 319.87 L178.15 320.40 L178.77 319.87 L179.40 318.60 L180.02 317.33 L180.65 316.80 L181.27 317.33 L181.90 318.60 L182.52 319.87 L183.15 320.40 L183.77 319.87 L184.40 318.60 L185.02 317.33 L185.65 316.80 L186.27 317.33 L186.90 318.60 L187.52 319.87 L188.15 320.40 L188.77 319.87 L189.40 318.60 L190.02 317.33 L190.65 316.80 L191.27 317.33 L191.90 318.60 L192.52 319.87 L193.15 320.40 L193.77 319.87 L194.40 318.60 L195.02 317.33 L195.65 316.80 L196.27 317.33 L196.90 318.60 L197.52 319.87 L198.15 320.40 L198.77 319.87 L199.40 318.60 L200.02 317.33 L200.65 316.80 L201.27 317.33 L201.90 318.60 L202.52 319.87 L203.15 320.40 L203.77 319.87 L204.40 318.60 L205.02 317.33 L205.65 316.80 L206.27 317.33 L206.90 318.60 L207.52 319.87 L208.15 320.40 L208.77 319.87 L209.40 318.60"/><path d="M282.30 318.60 L282.93 319.87 L283.55 320.40 L284.18 319.87 L284.80 318.60 L285.43 317.33 L286.05 316.80 L286.68 317.33 L287.30 318.60 L287.93 319.87 L288.55 320.40 L289.18 319.87 L289.80 318.60 L290.43 317.33 L291.05 316.80 L291.68 317.33 L292.30 318.60 L292.93 319.87 L293.55 320.40 L294.18 319.87 L294.80 318.60 L295.43 317.33 L296.05 316.80 L296.68 317.33 L297.30 318.60 L297.93 319.87 L298.55 320.40 L299.18 319.87 L299.80 318.60 L300.43 317.33 L301.05 316.80 L301.68 317.33 L302.30 318.60 L302.93 319.87 L303.55 320.40 L304.18 319.87 L304.80 318.60 L305.43 317.33 L306.05 316.80 L306.68 317.33 L307.30 318.60 L307.93 319.87 L308.55 320.40"/><path d="M315.30 318.60 L315.93 319.87 L316.55 320.40 L317.18 319.87 L317.80 318.60 L318.43 317.33 L319.05 316.80 L319.68 317.33 L320.30 318.60 L320.93 319.87 L321.55 320.40 L322.18 319.87 L322.80 318.60 L323.43 317.33 L324.05 316.80 L324.68 317.33 L325.30 318.60 L325.93 319.87 L326.55 320.40 L327.18 319.87 L327.80 318.60 L328.43 317.33 L329.05 316.80 L329.68 317.33 L330.30 318.60 L330.93 319.87 L331.55 320.40 L332.18 319.87 L332.80 318.60 L333.43 317.33 L334.05 316.80 L334.68 317.33 L335.30 318.60 L335.93 319.87 L336.55 320.40 L337.18 319.87 L337.80 318.60 L338.43 317.33 L339.05 316.80 L339.68 317.33 L340.30 318.60 L340.93 319.87 L341.55 320.40 L342.18 319.87 L342.80 318.60 L343.43 317.33 L344.05 316.80 L344.68 317.33 L345.30 318.60 L345.93 319.87 L346.55 320.40 L347.18 319.87 L347.80 318.60 L348.43 317.33 L349.05 316.80 L349.68 317.33 L350.30 318.60 L350.93 319.87 L351.55 320.40 L352.18 319.87 L352.80 318.60 L353.43 317.33 L354.05 316.80 L354.68 317.33 L355.30 318.60 L355.93 319.87 L356.55 320.40 L357.18 319.87 L357.80 318.60 L358.43 317.33 L359.05 316.80 L359.68 317.33 L360.30 318.60 L360.93 319.87 L361.55 320.40 L362.18 319.87 L362.80 318.60 L363.43 317.33 L364.05 316.80 L364.68 317.33 L365.30 318.60 L365.93 319.87 L366.55 320.40 L367.18 319.87 L367.80 318.60 L368.43 317.33 L369.05 316.80 L369.68 317.33 L370.30 318.60 L370.93 319.87 L371.55 320.40 L372.18 319.87 L372.80 318.60 L373.43 317.33 L374.05 316.80 L374.68 317.33 L375.30 318.60 L375.93 319.87 L376.55 320.40 L377.18 319.87 L377.80 318.60 L378.43 317.33 L379.05 316.80 L379.68 317.33 L380.30 318.60 L380.93 319.87 L381.55 320.40 L382.18 319.87 L382.80 318.60 L383.43 317.33 L384.05 316.80 L384.68 317.33 L385.30 318.60 L385.93 319.87 L386.55 320.40 L387.18 319.87 L387.80 318.60 L388.43 317.33 L389.05 316.80 L389.68 317.33 L390.30 318.60 L390.93 319.87 L391.55 320.40 L392.18 319.87 L392.80 318.60 L393.43 317.33 L394.05 316.80"/></svg><svg style="left:589px;top:537px" width="9" height="9" viewBox="0.000 -0.500 9 9" fill="none" stroke="#555" stroke-width="0.8"><path d="M0.5 8.5 L8.5 0.5 M4.5 8.5 L8.5 4.5"/></svg><div class="abs" style="left:41px;top:595px;width:558px;height:36px;background:#4990e2;border-radius:4px;box-shadow:0 1px 2px rgba(0,0,0,.1)"></div><div class="t" style="left:41px;top:603.3px;width:558px;text-align:center;font-size:14px;font-weight:700;color:#fff;letter-spacing:0.05px">Execute</div><div class="abs" style="left:21px;top:651px;width:598px;height:6px;background:#fbfdfc"></div><div class="abs" style="left:14px;top:51.3px;width:236.8px;height:44.4px;border:3px solid #ff0000;border-radius:2px"></div><div class="abs" style="left:36.3px;top:264px;width:381.6px;height:79.9px;border:3px solid #ff0000;border-radius:2px"></div><div class="abs" style="left:33.3px;top:578.2px;width:571.9px;height:61.7px;border:3px solid #ff0000;border-radius:2px"></div></div>
<svg style="left:479px;top:807px" width="13.2" height="10.4" viewBox="-0.400 -0.400 13.2 10.4"><rect x="0" y="0" width="13.2" height="4.5" rx="1.5" fill="#5fb2d8"/><rect x="0" y="5.9" width="13.2" height="4.5" rx="1.5" fill="#5fb2d8"/>
<path d="M7.6 2.25 H11.2 M5.4 8.15 H11.2" stroke="#282c34" stroke-width="0.9" stroke-linecap="round"/></svg>
<div class="t p" style="left:505.1px;top:801.5px;font-size:14px;letter-spacing:0.26px;color:#f6f6f8;font-weight:400">Background Tasks</div>
<svg style="left:642px;top:806px" width="11.5" height="13.5" viewBox="-0.800 0.000 11.5 13.5"><path d="M5.75 0 Q6.6 0 6.6 1 Q9.6 1.8 9.6 5.4 Q9.6 8.4 11.3 9.8 Q11.6 10.8 10.7 10.9 H0.8 Q-0.1 10.8 0.2 9.8 Q1.9 8.4 1.9 5.4 Q1.9 1.8 4.9 1 Q4.9 0 5.75 0 Z M4.2 11.8 H7.3 Q7.1 13.4 5.75 13.4 Q4.4 13.4 4.2 11.8 Z" fill="#9ea2a9"/></svg>
<div class="t p" style="left:667.5px;top:801.5px;font-size:14px;letter-spacing:0.31px;color:#9ea2a9;font-weight:400">Notifications</div>
<svg style="left:766px;top:807px" width="13" height="10" viewBox="-0.500 -0.700 13 10" fill="none" stroke="#9ea2a9" stroke-width="1.45" stroke-linecap="round"><path d="M0.9 0.7 H12.1 M0.7 5 H12.3 M0.9 9.3 H10.6"/></svg>
<div class="t p" style="left:792px;top:801.5px;font-size:14px;letter-spacing:-0.35px;color:#9ea2a9;font-weight:400">Logs</div>
<div class="t p" style="left:12px;top:835px;font-size:13px;letter-spacing:0.1px;color:#dddde0">Ready.</div>
</body>
</html>
